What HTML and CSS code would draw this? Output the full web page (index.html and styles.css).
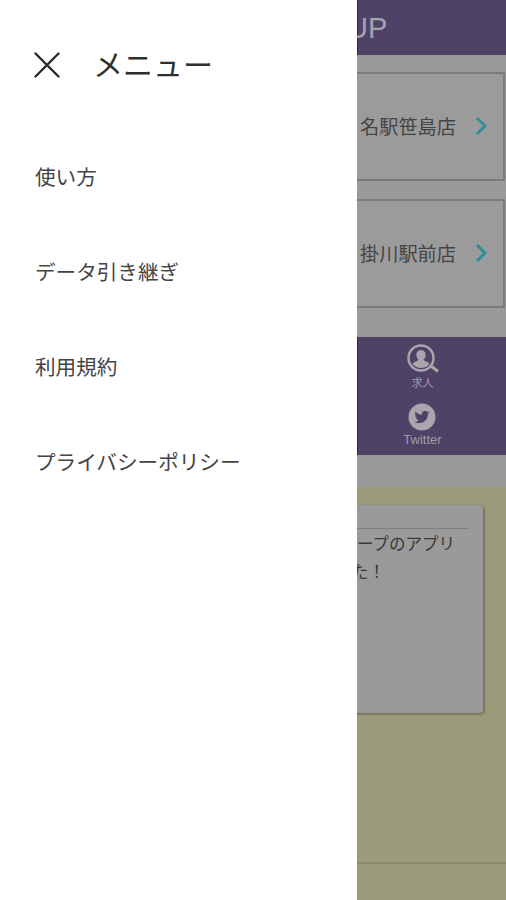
FILE: index.html
```html
<!DOCTYPE html>
<html lang="ja">
<head>
    <meta charset="UTF-8">
    <meta name="viewport" content="width=device-width, initial-scale=1.0">
    <title>メニュー</title>
    <link rel="stylesheet" href="styles.css">
</head>
<body>
    <div class="app">
        <!-- Drawer menu -->
        <nav class="drawer">
            <div class="drawer-head">
                <svg class="close-icon" width="26" height="26" viewBox="0 0 26 26">
                    <path d="M1.5 1.5L24.5 24.5M24.5 1.5L1.5 24.5"/>
                </svg>
                <span class="drawer-title">メニュー</span>
            </div>
            <a class="drawer-item">使い方</a>
            <a class="drawer-item">データ引き継ぎ</a>
            <a class="drawer-item">利用規約</a>
            <a class="drawer-item">プライバシーポリシー</a>
        </nav>

        <!-- Dimmed page behind the drawer -->
        <main class="page">
            <header class="page-head"><span class="page-title">UP</span></header>

            <section class="stores">
                <div class="store">
                    <span class="store-name">名駅笹島店</span>
                    <svg class="chevron" width="12" height="20" viewBox="0 0 12 20"><path d="M2 2L10 10L2 18"/></svg>
                </div>
                <div class="store">
                    <span class="store-name">掛川駅前店</span>
                    <svg class="chevron" width="12" height="20" viewBox="0 0 12 20"><path d="M2 2L10 10L2 18"/></svg>
                </div>
            </section>

            <section class="links">
                <div class="link">
                    <svg class="link-icon" width="32" height="30" viewBox="0 0 32 30">
                        <circle class="ring" cx="14" cy="14" r="12.500"/>
                        <path class="fill" d="M14 6c2.900 0 4.600 2.200 4.600 5 0 2-.9 3.600-2 4.600 0 .9.800 1.400 2.400 2 1.800.6 3 1.300 3.500 2.500a11 11 0 0 1-17 0c.5-1.200 1.700-1.900 3.500-2.500 1.600-.6 2.400-1.100 2.400-2-1.100-1-2-2.600-2-4.600 0-2.800 1.700-5 4.600-5z"/>
                        <path class="ring handle" d="M24 22L31 27.500"/>
                    </svg>
                    <span class="link-label small">求人</span>
                </div>
                <div class="link">
                    <svg class="link-icon" width="28" height="28" viewBox="0 0 28 28">
                        <circle class="fill" cx="14" cy="14" r="13.500"/>
                        <path class="bird" d="M21.500 9.300c-.6.300-1.200.4-1.800.5.600-.4 1.100-1 1.400-1.700-.6.400-1.300.6-2 .8a3.100 3.100 0 0 0-5.300 2.800c-2.600-.1-4.900-1.400-6.400-3.300-.8 1.400-.4 3.200 1 4.100-.5 0-1-.2-1.400-.4 0 1.500 1.100 2.800 2.500 3.100-.5.100-.9.100-1.400 0 .4 1.200 1.500 2.100 2.900 2.200a6.300 6.300 0 0 1-4.600 1.300c1.400.9 3 1.400 4.800 1.400 5.800 0 9-4.900 8.800-9.300.6-.4 1.100-1 1.500-1.500z"/>
                    </svg>
                    <span class="link-label">Twitter</span>
                </div>
            </section>

            <div class="gap"></div>

            <section class="news">
                <article class="news-card">
                    <div class="news-rule"></div>
                    <p class="news-text">ープのアプリ</p>
                    <p class="news-text news-text-tail">た！</p>
                </article>
                <div class="news-line"></div>
            </section>
        </main>
    </div>
</body>
</html>
```

FILE: styles.css
```css
* {
    box-sizing: border-box;
}

html, body {
    margin: 0;
    height: 100%;
}

body {
    font-family: "Noto Sans CJK JP", "Liberation Sans", sans-serif;
    background-color: #fff;
    overflow: hidden;
}

.app {
    display: flex;
    width: 506px;
    height: 900px;
}

/* Drawer */
.drawer {
    flex: 0 0 357px;
    background-color: #fff;
    color: #444;
}

.drawer-head {
    display: flex;
    align-items: center;
    gap: 33px;
    height: 130px;
    padding-left: 34px;
}

.close-icon path {
    fill: none;
    stroke: #2a2a2a;
    stroke-width: 2.400;
    stroke-linecap: round;
}

.drawer-title {
    padding-bottom: 4px;
    font-size: 30px;
    line-height: 1;
    color: #2f2f2f;
}

.drawer-item {
    display: block;
    height: 95px;
    padding-left: 35px;
    font-size: 20.600px;
    line-height: 93px;
    white-space: nowrap;
}

/* Page behind the drawer */
.page {
    flex: 1;
    display: flex;
    flex-direction: column;
    overflow: hidden;
    background-color: #9a9a9a;
}

.page-head {
    height: 55px;
    border-left: 1px solid #2e2468;
    background-color: #4e4367;
    color: #a5a1ad;
    font-family: "Liberation Sans", sans-serif;
    font-size: 29px;
    line-height: 57px;
}

/* the title runs on under the drawer */
.page-title {
    display: block;
    margin-left: -11px;
}

.stores {
    display: flex;
    flex-direction: column;
    gap: 18px;
    height: 282px;
    padding: 17px 1px 0 0;
}

.store {
    display: flex;
    align-items: center;
    justify-content: flex-end;
    gap: 19px;
    height: 109px;
    margin-left: -4px;
    padding: 0 16px 2px 0;
    border: 2px solid #7b7b7b;
    background-color: #9b9b9b;
}

.store-name {
    font-size: 19.200px;
    color: #444;
    white-space: nowrap;
}

.chevron path {
    fill: none;
    stroke: #2d8f96;
    stroke-width: 3;
}

.links {
    display: flex;
    flex-direction: column;
    align-items: center;
    height: 118px;
    padding: 7px 19px 0 0;
    border-left: 1px solid #2e2468;
    background-color: #4e4367;
}

.link {
    display: flex;
    flex-direction: column;
    align-items: center;
}

.link-icon {
    display: block;
}

.link + .link {
    margin-top: 13px;
}

.link-label {
    font-family: "Liberation Sans", sans-serif;
    font-size: 13px;
    line-height: 18px;
    color: #a09ca8;
}

.link-label.small {
    font-family: "Noto Sans CJK JP", sans-serif;
    font-size: 11px;
    line-height: 16px;
}

.ring {
    fill: none;
    stroke: #a8a5ad;
    stroke-width: 2.500;
}

.handle {
    stroke-width: 3;
}

.fill {
    fill: #a8a5ad;
}

.bird {
    fill: #4e4367;
}

.gap {
    height: 32px;
}

.news {
    flex: 1;
    display: flex;
    flex-direction: column;
    padding-top: 18px;
    background-color: #9b9b7b;
}

.news-card {
    height: 208px;
    margin: 0 23px 0 -6px;
    padding: 23px 14px 0 6px;
    border-radius: 3px;
    background-color: #9a9a9a;
    box-shadow: 1px 1px 3px rgba(0, 0, 0, 0.4);
}

.news-rule {
    height: 1px;
    background-color: #7f7f7f;
}

.news-text {
    margin: 0;
    font-size: 16.500px;
    line-height: 28px;
    color: #383838;
    white-space: nowrap;
}

.news-text-tail {
    margin-left: -5px;
}

.news-line {
    height: 2px;
    margin-top: 149px;
    background-color: #8a8a70;
}
```
